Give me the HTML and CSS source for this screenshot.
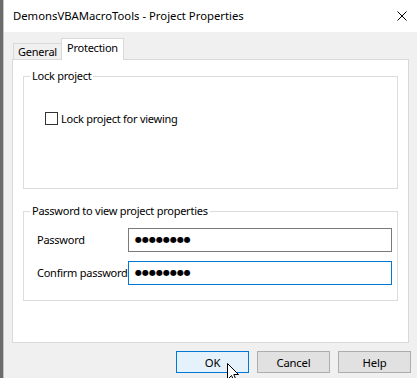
FILE: index.html
```html
<!doctype html>
<html>
<head>
<meta charset="utf-8" />
<title>DemonsVBAMacroTools - Project Properties</title>
<link rel="stylesheet" href="styles.css">
</head>
<body>
<div class="window">
	<!-- Titelzeile -->
	<div class="titlebar">
		<span class="title">DemonsVBAMacroTools - Project Properties</span>
		<svg class="close" width="10" height="10" viewBox="0 0 10 10"><path d="M0.5 0.5 L9.5 9.5 M9.5 0.5 L0.5 9.5" stroke="#000" stroke-width="1" fill="none"/></svg>
	</div>
	<div class="client">
		<div class="tabs">
			<div class="tab">General</div>
			<div class="tab active">Protection</div>
		</div>
		<div class="panel">
			<div class="group lock">
				<span class="legend">Lock project</span>
				<label class="check"><span class="box"></span>Lock project for viewing</label>
			</div>
			<div class="group pass">
				<span class="legend">Password to view project properties</span>
				<div class="rows">
					<span class="label">Password</span>
					<div class="field"><span class="dots">●●●●●●●●</span></div>
					<span class="label">Confirm password</span>
					<div class="field focus"><span class="dots">●●●●●●●●</span></div>
				</div>
			</div>
		</div>
		<div class="buttons">
			<button type="button" class="default">OK</button>
			<button type="button">Cancel</button>
			<button type="button">Help</button>
		</div>
	</div>
	<!-- Mauszeiger über dem OK-Knopf -->
	<svg class="cursor" width="13" height="20" viewBox="0 0 13 20"><path d="M0.5 0.5 L0.5 16.5 L4.5 12.5 L7.5 19 L9.5 18 L6.8 11.5 L11.5 11.5 Z" fill="#fff" stroke="#000" stroke-width="1" stroke-linejoin="miter"/></svg>
</div>
</body>
</html>
```

FILE: styles.css
```css
html, body { margin: 0; height: 378px; overflow: hidden; }
body { background: #6b6b6b; font: 11px/16px "Segoe UI", "Noto Sans", sans-serif; letter-spacing: -0.25px; color: #000; }
.window { position: relative; margin-left: 3px; border-left: 1px solid #c4c4c4; background: #f0f0f0; height: 378px; }
.titlebar { height: 32px; background: #fff; display: flex; align-items: center; justify-content: space-between; padding: 0 10px 0 9px; }
.title { font-size: 11.3px; letter-spacing: 0; }
.client { padding: 7px 8px 0 8px; }
.tabs { display: flex; align-items: flex-end; height: 20px; }
.tab { box-sizing: border-box; width: 49px; height: 16px; margin-left: 1px; border: 1px solid #d9d9d9; border-bottom: none; background: #f0f0f0; line-height: 15px; text-align: center; }
.tab.active { position: relative; z-index: 1; width: 63px; height: 22px; margin: 0 0 -1px -1px; padding-top: 1px; background: #fff; line-height: 15px; }
.panel { box-sizing: border-box; height: 284px; border: 1px solid #d9d9d9; background: #fff; padding: 16px 10px 0; }
.group { border: 1px solid #dcdcdc; box-sizing: border-box; }
.lock { height: 113px; }
.pass { height: 90px; margin-top: 22px; }
.legend { display: block; width: fit-content; margin: -9px 0 0 6px; padding: 0 2px; background: #fff; line-height: 16px; }
.check { display: flex; align-items: center; height: 13px; margin: 28px 0 0 21px; }
.box { box-sizing: border-box; width: 13px; height: 13px; border: 1px solid #333; margin-right: 3px; background: #fff; }
.rows { display: grid; grid-template-columns: 91px 264px; row-gap: 9px; align-items: center; margin: 9px 0 0 13px; }
.label { white-space: nowrap; }
.field { box-sizing: border-box; height: 24px; border: 1px solid #7a7a7a; padding-left: 6px; display: flex; align-items: center; }
.field.focus { border-color: #0078d7; }
.dots { font-family: "DejaVu Sans", sans-serif; font-size: 8px; letter-spacing: 0; }
.buttons { display: flex; gap: 8px; justify-content: flex-end; margin: 8px -2px 0 0; }
button { box-sizing: border-box; width: 73px; height: 22px; border: 1px solid #adadad; background: #e1e1e1; font: 11.3px "Segoe UI", "Noto Sans", sans-serif; letter-spacing: -0.2px; color: #000; padding: 0; }
button.default { border-color: #0078d7; background: #e5f1fb; }
.cursor { position: absolute; left: 223px; top: 363px; }
```
